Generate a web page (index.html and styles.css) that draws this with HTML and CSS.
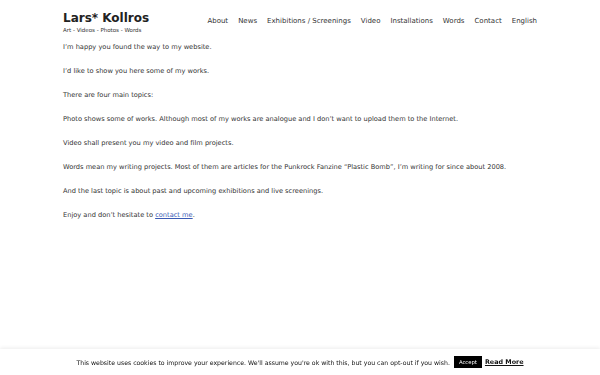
FILE: index.html
```html
<!DOCTYPE html>
<html lang="en">
<head>
  <meta charset="UTF-8" />
  <title>Lars* Kollros</title>
  <link rel="stylesheet" href="styles.css">
</head>
<body>
  <header class="site-header">
    <div class="branding">
      <div class="site-title">Lars* Kollros</div>
      <div class="site-desc">Art - Videos - Photos - Words</div>
    </div>
    <nav class="main-nav">
      <a href="#">About</a>
      <a href="#">News</a>
      <a href="#">Exhibitions / Screenings</a>
      <a href="#">Video</a>
      <a href="#">Installations</a>
      <a href="#">Words</a>
      <a href="#">Contact</a>
      <a href="#">English</a>
    </nav>
  </header>

  <main class="content">
    <p>I’m happy you found the way to my website.</p>
    <p>I’d like to show you here some of my works.</p>
    <p>There are four main topics:</p>
    <p>Photo shows some of works. Although most of my works are analogue and I don’t want to upload them to the Internet.</p>
    <p>Video shall present you my video and film projects.</p>
    <p>Words mean my writing projects. Most of them are articles for the Punkrock Fanzine “Plastic Bomb”, I’m writing for since about 2008.</p>
    <p>And the last topic is about past and upcoming exhibitions and live screenings.</p>
    <p>Enjoy and don’t hesitate to <a href="#">contact me</a>.</p>
  </main>

  <div class="cookie-bar">
    <span>This website uses cookies to improve your experience. We'll assume you're ok with this, but you can opt-out if you wish.</span>
    <button class="accept">Accept</button>
    <a href="#" class="read-more">Read More</a>
  </div>
</body>
</html>
```

FILE: styles.css
```css
body {
  margin: 0;
  background: #fff;
  color: #333;
  font-family: "DejaVu Sans", Verdana, sans-serif;
  font-size: 7px;
}

a {
  color: #333;
  text-decoration: none;
}

.site-header {
  width: 474px;
  margin: 0 auto;
  display: flex;
  justify-content: space-between;
  align-items: center;
  padding-top: 9px;
}

.site-title {
  font-size: 12px;
  font-weight: 700;
  color: #222;
  line-height: 16px;
  margin-top: 1px;
}

.site-desc {
  font-size: 5.5px;
  line-height: 10px;
  margin-top: -1px;
}

.main-nav {
  display: flex;
  gap: 10px;
  font-size: 7px;
  margin-top: -3px;
}

.content {
  width: 474px;
  margin: 0 auto;
  padding-top: 7px;
}

.content p {
  margin: 0 0 14px;
  line-height: 10px;
  font-size: 6.65px;
}

.content p a {
  color: #3b5bb5;
  text-decoration: underline;
}

.cookie-bar {
  position: fixed;
  left: 0;
  right: 0;
  bottom: 0;
  height: 26px;
  background: #fff;
  box-shadow: 0 -1px 4px rgba(0,0,0,0.08);
  display: flex;
  justify-content: center;
  align-items: center;
  gap: 3px;
  font-size: 6.2px;
  color: #111;
}

.cookie-bar .accept {
  background: #000;
  color: #fff;
  border: none;
  font-family: inherit;
  font-size: 5.3px;
  padding: 3px 5px;
  margin-left: 1px;
}

.cookie-bar .read-more {
  font-weight: 700;
  text-decoration: underline;
  color: #111;
  font-size: 6.4px;
}
```
